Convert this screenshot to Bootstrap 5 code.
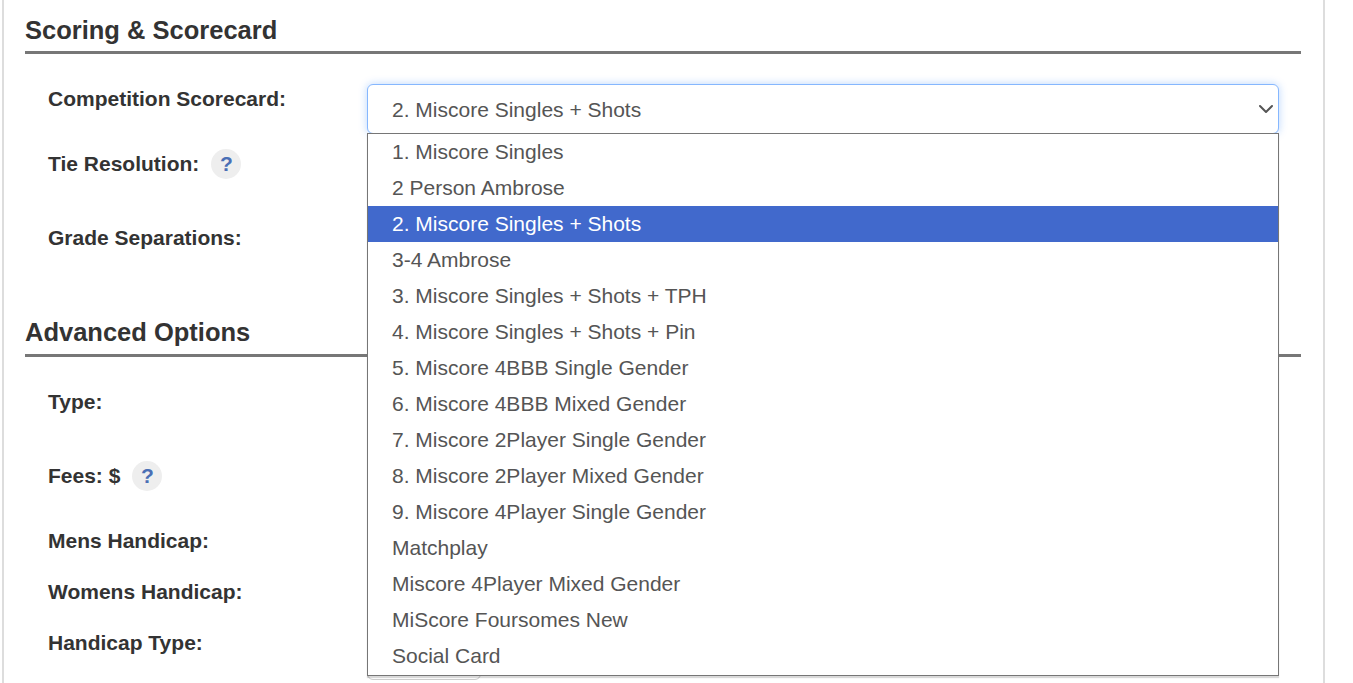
<!DOCTYPE html>
<html lang="en">
<head>
<meta charset="utf-8">
<title>Scoring &amp; Scorecard</title>
<link href="https://cdn.jsdelivr.net/npm/bootstrap@5.3.0/dist/css/bootstrap.min.css" rel="stylesheet">
<style>
html, body { height: 683px; overflow: hidden; background: #fff; }
body { font-family: "Liberation Sans", Arial, sans-serif; color: #333; }
.sheet { margin-left: 2px; width: 1323px; height: 683px; border-left: 2px solid #ddd; border-right: 2px solid #ddd; padding: 0 22px 0 21px; overflow: hidden; }
.sect-title { font-size: 25.5px; line-height: 30px; font-weight: 700; color: #333; margin: 0; }
.first-title { padding-top: 15px; }
.sect-rule { height: 3px; background: #777; margin-top: 6px; }
.rule-low { margin-top: 7px; }
.form-area { padding-left: 23px; padding-right: 22px; }
.form-line { display: flex; align-items: flex-start; }
.line-label { width: 319px; flex: none; font-size: 21px; line-height: 30px; font-weight: 700; color: #333; margin: 0; display: flex; align-items: center; gap: 12px; }
.line-field { flex: 1 1 auto; position: relative; }
.h-51 { height: 51px; } .h-65 { height: 65px; } .h-74 { height: 74px; }
.help-dot { width: 30px; height: 30px; border-radius: 50%; background: #eee; color: #4a6fb5; font-size: 21px; font-weight: 700; display: flex; align-items: center; justify-content: center; }
.score-select.form-select { height: 50px; font-size: 21px; line-height: 30px; color: #555; padding: 8px 36px 6px 24px; border: 1px solid #86b7fe; border-radius: 6px; box-shadow: 0 0 8px rgba(13,110,253,.28); font-family: inherit; background-image: url("data:image/svg+xml,%3csvg xmlns='http://www.w3.org/2000/svg' viewBox='0 0 16 16'%3e%3cpath fill='none' stroke='%23555' stroke-linecap='round' stroke-linejoin='round' stroke-width='2' d='m2 5 6 6 6-6'/%3e%3c/svg%3e"); background-size: 16px 16px; background-position: right 4px center; }
.score-list { position: absolute; top: 49px; left: 0; right: 0; z-index: 20; background: #fff; border: 1px solid #767676; padding-bottom: 1px; box-shadow: 0 2px 1px rgba(0,0,0,.15); }
.score-opt { height: 36px; line-height: 36px; padding-left: 24px; font-size: 21px; color: #555; white-space: nowrap; }
.score-opt-on { background: #4169cc; color: #fff; }
.small-ctrl { width: 114px; height: 52px; border: 1px solid #ccc; border-radius: 6px; background: #fff; }
.gap-tail { height: 61px; }
.second-top { padding-top: 33px; }
.sp-top { height: 30px; }
.sp-adv { height: 30px; }
</style>
</head>
<body>
<div class="sheet">
  <h4 class="sect-title first-title">Scoring &amp; Scorecard</h4>
  <div class="sect-rule"></div>
  <div class="sp-top"></div>
  <div class="form-area">
    <div class="form-line h-65">
      <label class="line-label">Competition Scorecard:</label>
      <div class="line-field">
        <select class="form-select score-select"><option>2. Miscore Singles + Shots</option></select>
        <div class="score-list">
          <div class="score-opt">1. Miscore Singles</div>
          <div class="score-opt">2 Person Ambrose</div>
          <div class="score-opt score-opt-on">2. Miscore Singles + Shots</div>
          <div class="score-opt">3-4 Ambrose</div>
          <div class="score-opt">3. Miscore Singles + Shots + TPH</div>
          <div class="score-opt">4. Miscore Singles + Shots + Pin</div>
          <div class="score-opt">5. Miscore 4BBB Single Gender</div>
          <div class="score-opt">6. Miscore 4BBB Mixed Gender</div>
          <div class="score-opt">7. Miscore 2Player Single Gender</div>
          <div class="score-opt">8. Miscore 2Player Mixed Gender</div>
          <div class="score-opt">9. Miscore 4Player Single Gender</div>
          <div class="score-opt">Matchplay</div>
          <div class="score-opt">Miscore 4Player Mixed Gender</div>
          <div class="score-opt">MiScore Foursomes New</div>
          <div class="score-opt">Social Card</div>
        </div>
      </div>
    </div>
    <div class="form-line h-74">
      <div class="line-label"><span>Tie Resolution:</span><span class="help-dot">?</span></div>
    </div>
    <div class="form-line gap-tail">
      <label class="line-label">Grade Separations:</label>
    </div>
  </div>
  <h4 class="sect-title second-top">Advanced Options</h4>
  <div class="sect-rule rule-low"></div>
  <div class="sp-adv"></div>
  <div class="form-area">
    <div class="form-line h-74"><label class="line-label">Type:</label></div>
    <div class="form-line h-65">
      <div class="line-label"><span>Fees: $</span><span class="help-dot">?</span></div>
    </div>
    <div class="form-line h-51"><label class="line-label">Mens Handicap:</label></div>
    <div class="form-line h-51"><label class="line-label">Womens Handicap:</label></div>
    <div class="form-line h-51">
      <label class="line-label">Handicap Type:</label>
      <div class="line-field"><div class="small-ctrl"></div></div>
    </div>
  </div>
</div>
<script src="https://cdn.jsdelivr.net/npm/bootstrap@5.3.0/dist/js/bootstrap.bundle.min.js"></script>
</body>
</html>
